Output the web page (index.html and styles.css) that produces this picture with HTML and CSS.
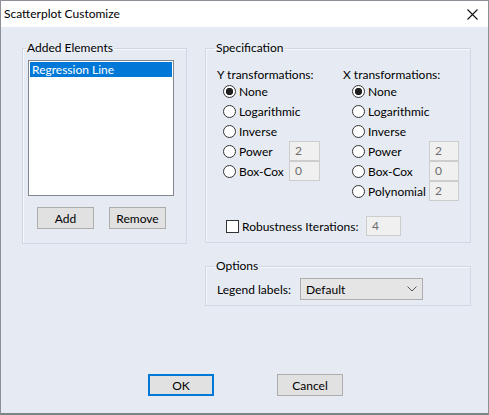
FILE: index.html
```html
<!DOCTYPE html>
<html>
<head>
<meta charset="utf-8">
<link rel="stylesheet" href="styles.css">
</head>
<body>
<div class="window">
  <div class="titlebar">
    <span class="title">Scatterplot Customize</span>
    <svg class="close" width="11" height="11" viewBox="0 0 11 11"><path d="M0.5 0.5 L10.5 10.5 M10.5 0.5 L0.5 10.5" stroke="#111" stroke-width="1.1" fill="none"/></svg>
  </div>
  <div class="body">
    <div class="top">
      <fieldset class="group added">
        <legend>Added Elements</legend>
        <div class="listbox"><div class="item selected">Regression Line</div></div>
        <div class="list-buttons">
          <button class="btn small">Add</button>
          <button class="btn small">Remove</button>
        </div>
      </fieldset>
      <div class="right">
        <fieldset class="group spec">
          <legend>Specification</legend>
          <div class="cols">
            <div class="col ycol">
              <div class="heading">Y transformations:</div>
              <div class="opt"><span class="radio checked"></span><span class="lbl">None</span></div>
              <div class="opt"><span class="radio"></span><span class="lbl">Logarithmic</span></div>
              <div class="opt"><span class="radio"></span><span class="lbl">Inverse</span></div>
              <div class="opt"><span class="radio"></span><span class="lbl">Power</span><span class="field">2</span></div>
              <div class="opt"><span class="radio"></span><span class="lbl">Box-Cox</span><span class="field">0</span></div>
            </div>
            <div class="col xcol">
              <div class="heading">X transformations:</div>
              <div class="opt"><span class="radio checked"></span><span class="lbl">None</span></div>
              <div class="opt"><span class="radio"></span><span class="lbl">Logarithmic</span></div>
              <div class="opt"><span class="radio"></span><span class="lbl">Inverse</span></div>
              <div class="opt"><span class="radio"></span><span class="lbl">Power</span><span class="field">2</span></div>
              <div class="opt"><span class="radio"></span><span class="lbl">Box-Cox</span><span class="field">0</span></div>
              <div class="opt"><span class="radio"></span><span class="lbl">Polynomial</span><span class="field">2</span></div>
            </div>
          </div>
          <div class="robust">
            <span class="checkbox"></span><span class="robust-label">Robustness Iterations:</span><span class="field wide">4</span>
          </div>
        </fieldset>
        <fieldset class="group options">
          <legend>Options</legend>
          <div class="legend-row">
            <span class="legend-label">Legend labels:</span>
            <div class="select">
              <span>Default</span>
              <svg width="10" height="6" viewBox="0 0 10 6"><path d="M0.5 0.5 L5 5 L9.5 0.5" stroke="#555" stroke-width="1" fill="none"/></svg>
            </div>
          </div>
        </fieldset>
      </div>
    </div>
    <div class="dialog-buttons">
      <button class="btn wide-btn default">OK</button>
      <button class="btn wide-btn">Cancel</button>
    </div>
  </div>
</div>
</body>
</html>
```

FILE: styles.css
```css
* { box-sizing: border-box; }
html, body { margin: 0; padding: 0; }
body {
  font-family: Lato, "Liberation Sans", sans-serif;
  font-size: 12px;
  color: #000;
  background: #ffffff;
}
.window {
  width: 489px;
  height: 415px;
  border: 1px solid #8d9096;
  border-bottom: 2px solid #7d828b;
  display: flex;
  flex-direction: column;
  background: #e6ebf3;
}
.titlebar {
  height: 26px;
  background: #ffffff;
  display: flex;
  align-items: center;
  padding-left: 3px;
  flex: none;
}
.title { line-height: 26px; font-size: 12px; }
.close { margin-left: auto; margin-right: 10px; }
.body {
  flex: 1;
  padding: 14px 0 0 21px;
}
.top {
  display: flex;
  align-items: flex-start;
  gap: 18px;
}
.group {
  margin: 0;
  border: 1px solid #d2d8e1;
  box-shadow: inset 1px 1px 0 #f5f7fb;
  min-width: 0;
}
.group legend {
  padding: 0 1px;
  margin-left: -2px;
  line-height: 14px;
}
.added {
  width: 165px;
  padding: 5px 5px 14px 5px;
}
.listbox {
  width: 146px;
  height: 136px;
  background: #ffffff;
  border: 1px solid #82868f;
  padding: 1px;
}
.item {
  height: 15px;
  line-height: 15px;
  padding-left: 2px;
}
.item.selected {
  background: #0078d7;
  color: #ffffff;
}
.list-buttons {
  display: flex;
  gap: 15px;
  margin-top: 11px;
  padding-left: 9px;
}
.btn {
  font-family: inherit;
  font-size: 12px;
  background: #e1e1e1;
  border: 1px solid #adadad;
  height: 22px;
  padding: 0;
  color: #000;
}
.btn.small { width: 57px; }
.right {
  width: 266px;
  display: flex;
  flex-direction: column;
}
.spec {
  padding: 13px 6px 6px 11px;
}
.cols { display: flex; }
.col { display: flex; flex-direction: column; }
.ycol { width: 126px; }
.heading {
  line-height: 13px;
  height: 13px;
}
.opt {
  height: 20px;
  display: flex;
  align-items: center;
}
.ycol .opt { padding-left: 6px; }
.xcol .opt { padding-left: 9px; }
.radio {
  width: 13px;
  height: 13px;
  border: 1px solid #333;
  border-radius: 50%;
  background: #fff;
  flex: none;
  margin-right: 3px;
}
.radio.checked {
  background: radial-gradient(circle, #1f1f1f 0 3.4px, #ffffff 4px);
}
.ycol .lbl { width: 50px; }
.xcol .lbl { width: 61px; }
.field {
  width: 31px;
  height: 20px;
  border: 1px solid #cdcdcd;
  background: #f0f0f0;
  color: #6d6d6d;
  padding-left: 5px;
  line-height: 18px;
}
.xcol .field { width: 30px; }
.robust {
  margin-top: 15px;
  height: 20px;
  display: flex;
  align-items: center;
  padding-left: 9px;
}
.checkbox {
  width: 13px;
  height: 13px;
  border: 1px solid #333;
  background: #fff;
  margin-right: 3px;
  flex: none;
}
.robust-label { width: 124px; }
.field.wide { width: 35px; }
.options {
  margin-top: 16px;
  padding: 5px 6px 5px 11px;
}
.legend-row {
  display: flex;
  align-items: center;
  height: 22px;
}
.legend-label { width: 83px; }
.select {
  width: 123px;
  height: 22px;
  background: #e5e5e5;
  border: 1px solid #adadad;
  display: flex;
  align-items: center;
  justify-content: space-between;
  padding: 0 5px 0 5px;
}
.dialog-buttons {
  display: flex;
  gap: 63px;
  margin-top: 68px;
  padding-left: 126px;
}
.btn.wide-btn { width: 66px; }
.btn.default {
  border: 1px solid #0078d7;
  box-shadow: inset 0 0 0 1px #0078d7;
}
```
